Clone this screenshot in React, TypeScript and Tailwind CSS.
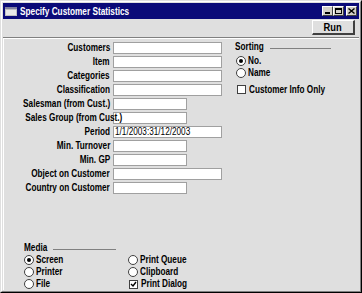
const FONT = "font-['Liberation_Sans',Arial,sans-serif]";

// narrow text, the original font is a condensed sans
const T = ({ children, right, className = "" }: { children: React.ReactNode; right?: boolean; className?: string }) => (
  <span className={`inline-block whitespace-nowrap scale-x-[0.82] ${right ? "origin-right" : "origin-left"} ${className}`}>
    {children}
  </span>
);

const Radio = ({ checked }: { checked?: boolean }) => (
  <span className="w-[10px] h-[10px] rounded-full border border-[#404040] bg-white flex items-center justify-center shrink-0">
    {checked && <span className="w-[4px] h-[4px] rounded-full bg-black" />}
  </span>
);

const Check = ({ checked }: { checked?: boolean }) => (
  <span className="w-[9px] h-[9px] border border-[#404040] bg-white flex items-center justify-center shrink-0">
    {checked && (
      <svg width="7" height="7" viewBox="0 0 7 7">
        <path d="M1 3 L3 5 L6 1" stroke="black" strokeWidth="1.4" fill="none" />
      </svg>
    )}
  </span>
);

const TitleButton = ({ children }: { children: React.ReactNode }) => (
  <div className="w-[11px] h-[10px] bg-[#d4d0c8] border-t border-l border-white border-r border-b border-r-[#404040] border-b-[#404040] flex items-center justify-center">
    {children}
  </div>
);

const fields = [
  { label: "Customers", long: true },
  { label: "Item", long: true },
  { label: "Categories", long: true },
  { label: "Classification", long: true },
  { label: "Salesman (from Cust.)", long: false },
  { label: "Sales Group (from Cust.)", long: false },
  { label: "Period", long: true, value: "1/1/2003:31/12/2003" },
  { label: "Min. Turnover", long: false },
  { label: "Min. GP", long: false },
  { label: "Object on Customer", long: true },
  { label: "Country on Customer", long: false },
];

const App = () => {
  return (
    <div className={`w-[362px] h-[293px] bg-[#dfdfdf] border border-t-[#dfdfdf] border-l-[#dfdfdf] border-r-black border-b-black ${FONT}`}>
      <div className="w-full h-full border border-t-white border-l-white border-r-[#808080] border-b-[#808080] flex flex-col p-[1px]">
        {/* title bar */}
        <div className="h-[16px] bg-[#0a0a78] flex items-center pl-[2px] pr-[2px]">
          <svg width="12" height="9" viewBox="0 0 12 9" className="mr-[3px]">
            <rect x="0" y="0" width="12" height="9" fill="#c0c0c0" />
            <rect x="0" y="0" width="12" height="2" fill="#8080a0" />
            <rect x="1" y="3" width="10" height="5" fill="#e8e8e8" />
          </svg>
          <span className="text-white font-bold text-[11px] leading-none">
            <span className="inline-block whitespace-nowrap scale-x-[0.75] origin-left">Specify Customer Statistics</span>
          </span>
          <div className="ml-auto flex items-center">
            <TitleButton>
              <span className="w-[5px] h-[2px] bg-black mt-[4px]" />
            </TitleButton>
            <TitleButton>
              <span className="w-[7px] h-[6px] border border-black border-t-2" />
            </TitleButton>
            <div className="ml-[2px]">
              <TitleButton>
                <svg width="7" height="6" viewBox="0 0 7 6">
                  <path d="M0.5 0.5 L6.5 5.5 M6.5 0.5 L0.5 5.5" stroke="black" strokeWidth="1.4" />
                </svg>
              </TitleButton>
            </div>
          </div>
        </div>

        {/* toolbar */}
        <div className="h-[18px] flex items-start justify-end pr-[4px] pt-[1px]">
          <button className="w-[43px] h-[15px] bg-[#dfdfdf] border-t border-l border-white border-r-2 border-b-2 border-r-[#404040] border-b-[#404040] text-[11px] font-bold leading-none text-black">
            <span className="inline-block scale-x-[0.85]">Run</span>
          </button>
        </div>
        <div className="h-[1px] bg-[#808080]" />
        <div className="h-[1px] bg-white" />

        {/* body */}
        <div className="flex-1 border-l border-white flex flex-col">
          <div className="flex pt-[3px]">
            <div className="flex flex-col gap-[2px]">
              {fields.map((f) => (
                <div key={f.label} className="flex items-center h-[12px]">
                  <div className="w-[109px] text-right pr-[3px] text-[10px] font-bold text-black leading-none">
                    <T right>{f.label}</T>
                  </div>
                  <div
                    className={`h-[12px] ${f.long ? "w-[109px]" : "w-[74px]"} bg-white border border-[#a0a0a0] text-[10px] leading-[10px] pl-[1px] text-black`}
                  >
                    {f.value && <T>{f.value}</T>}
                  </div>
                </div>
              ))}
            </div>
            <div className="ml-[13px] flex flex-col">
              <div className="flex items-center w-[96px] h-[12px] mt-[-1px]">
                <span className="text-[10px] font-bold leading-none">
                  <T>Sorting</T>
                </span>
                <span className="ml-auto w-[67px] h-[1px] bg-[#808080] mt-[3px]" />
              </div>
              <div className="flex items-center gap-[2px] h-[11px] mt-[2px] ml-[1px]">
                <Radio checked />
                <span className="text-[10px] font-bold leading-none">
                  <T>No.</T>
                </span>
              </div>
              <div className="flex items-center gap-[2px] h-[11px] mt-[1px] ml-[1px]">
                <Radio />
                <span className="text-[10px] font-bold leading-none">
                  <T>Name</T>
                </span>
              </div>
              <div className="flex items-center gap-[3px] h-[11px] mt-[6px] ml-[2px]">
                <Check />
                <span className="text-[10px] font-bold leading-none">
                  <T>Customer Info Only</T>
                </span>
              </div>
            </div>
          </div>

          {/* media */}
          <div className="mt-[49px] ml-[20px] flex flex-col">
            <div className="flex items-center w-[92px] h-[10px]">
              <span className="text-[10px] font-bold leading-none">
                <T>Media</T>
              </span>
              <span className="ml-auto w-[63px] h-[1px] bg-[#808080] mt-[3px]" />
            </div>
            <div className="flex mt-[1px]">
              <div className="flex flex-col w-[104px]">
                {["Screen", "Printer", "File"].map((t, i) => (
                  <div key={t} className="flex items-center gap-[2px] h-[12px]">
                    <Radio checked={i === 0} />
                    <span className="text-[10px] font-bold leading-none">
                      <T>{t}</T>
                    </span>
                  </div>
                ))}
              </div>
              <div className="flex flex-col">
                <div className="flex items-center gap-[2px] h-[12px]">
                  <Radio />
                  <span className="text-[10px] font-bold leading-none">
                    <T>Print Queue</T>
                  </span>
                </div>
                <div className="flex items-center gap-[2px] h-[12px]">
                  <Radio />
                  <span className="text-[10px] font-bold leading-none">
                    <T>Clipboard</T>
                  </span>
                </div>
                <div className="flex items-center gap-[3px] h-[12px] ml-[1px]">
                  <Check checked />
                  <span className="text-[10px] font-bold leading-none">
                    <T>Print Dialog</T>
                  </span>
                </div>
              </div>
            </div>
          </div>
        </div>
      </div>
    </div>
  );
};

export default App;
